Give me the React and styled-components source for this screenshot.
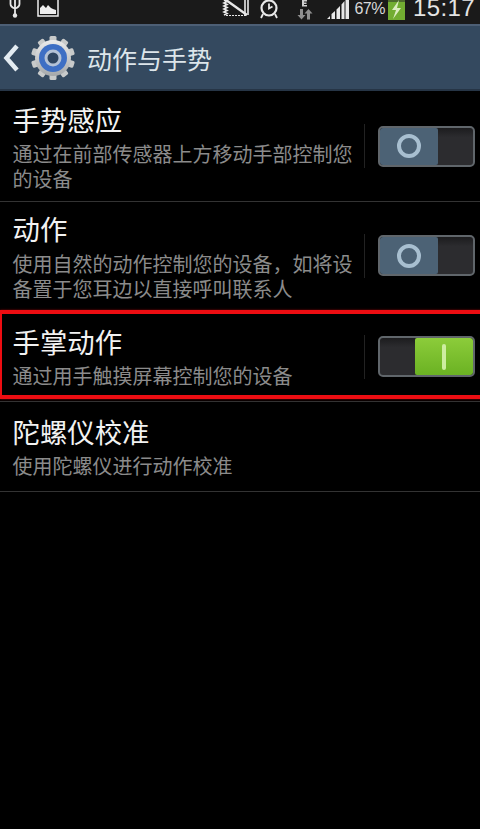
import React from "react";
import styled, { createGlobalStyle } from "styled-components";

const Global = createGlobalStyle`
  html, body { margin: 0; padding: 0; background: #000; }
  body { font-family: "Noto Sans CJK SC", "Liberation Sans", sans-serif; }
`;

const Screen = styled.div`
  width: 480px;
  height: 829px;
  overflow: hidden;
  background: #000;
  display: flex;
  flex-direction: column;
`;

const StatusBar = styled.div`
  height: 24px;
  flex: none;
  background: #1a1a1a;
  display: flex;
  align-items: flex-start;
  padding-left: 9px;
  overflow: hidden;
  color: #e6e6e6;
`;

const StatusLeft = styled.div`
  display: flex;
  align-items: flex-start;
  gap: 16px;
  flex: 1;
`;

const StatusRight = styled.div`
  display: flex;
  align-items: flex-start;
`;

const StatusIcon = styled.svg`
  display: block;
  flex: none;
  margin-left: ${(p) => p.$left || 0}px;
`;

const Percent = styled.span`
  font: 16px/16px "Liberation Sans", sans-serif;
  letter-spacing: -0.5px;
  color: #d8d8d8;
  margin: 1px 3px 0 5px;
`;

const Clock = styled.span`
  font: 24px/20px "Liberation Sans", sans-serif;
  letter-spacing: 0.4px;
  color: #e4e4e4;
  margin: -2px 5px 0 8px;
`;

const ActionBar = styled.header`
  height: 67px;
  flex: none;
  box-sizing: border-box;
  background: #34495f;
  border-top: 2px solid #4d5f75;
  border-bottom: 2px solid #263546;
  display: flex;
  align-items: center;
  padding-left: 3px;
`;

const Title = styled.h1`
  margin: 0 0 0 11px;
  font-size: 25px;
  font-weight: 400;
  line-height: 34px;
  color: #dde5ea;
`;

const List = styled.div`
  display: flex;
  flex-direction: column;
`;

const Row = styled.div`
  position: relative;
  box-sizing: border-box;
  height: ${(p) => p.$h}px;
  display: flex;
  align-items: center;
  padding: 0 5px ${(p) => p.$pb || 0}px 12.5px;
  border-bottom: 1px solid #333;

  ${(p) =>
    p.$marked &&
    `&::after {
      content: "";
      position: absolute;
      left: 0;
      right: -4px;
      top: -2px;
      bottom: 2px;
      border-style: solid;
      border-color: #ed0d12;
      border-width: 4px 4px 4px 2px;
      box-shadow: 0 0 2px #8a0508;
      pointer-events: none;
    }`}
`;

const Texts = styled.div`
  flex: 1;
  min-width: 0;
  align-self: flex-start;
  padding-top: ${(p) => p.$top}px;
`;

const Heading = styled.div`
  font-size: 27.4px;
  line-height: 36px;
  color: #f2f2f2;
`;

const Sub = styled.div`
  font-size: 20px;
  line-height: 24.5px;
  margin-top: ${(p) => p.$gap}px;
  color: #8b8b8b;
  width: 344px;
`;

const Separator = styled.div`
  width: 1px;
  height: 44px;
  background: #222;
  margin-right: 13px;
  flex: none;
`;

const Toggle = styled.div`
  width: 97px;
  height: 41px;
  flex: none;
  box-sizing: border-box;
  border: 2px solid #60666b;
  border-radius: 5px;
  background: linear-gradient(#1c1c1e, #2c2c2f 25%, #2c2c2f);
  display: flex;
  justify-content: ${(p) => (p.$on ? "flex-end" : "flex-start")};
  overflow: hidden;
`;

const Thumb = styled.div`
  width: 58px;
  height: 100%;
  background: ${(p) => (p.$on ? "linear-gradient(#8ccc3a, #6bb223)" : "#4c6275")};
  border-radius: 2px;
  display: flex;
  align-items: center;
  justify-content: center;
`;

const Ring = styled.div`
  width: 24px;
  height: 24px;
  box-sizing: border-box;
  border: 4px solid #a8bfd0;
  border-radius: 50%;
`;

const Bar = styled.div`
  width: 4px;
  height: 26px;
  background: #cdeda0;
  border-radius: 2px;
`;

const Usb = () => (
  <StatusIcon width="12" height="18" viewBox="0 0 12 18" fill="none" stroke="#e8e8e8" strokeWidth="1.8">
    <path d="M6 0v15M1.500 0v4q0 3 4.500 4.500Q10.500 7 10.500 4V0" />
    <circle cx="6" cy="15.500" r="2.200" fill="#e8e8e8" stroke="none" />
  </StatusIcon>
);

const Picture = () => (
  <StatusIcon width="22" height="17" viewBox="0 0 22 17">
    <rect x="1" y="-3" width="20" height="19" fill="#161616" stroke="#eee" strokeWidth="1.500" />
    <path d="M3 14V8l3-3 3 3 2-3 3 3 2 1 3 1v4z" fill="#eee" />
  </StatusIcon>
);

const Nfc = () => (
  <StatusIcon width="28" height="17" viewBox="0 0 28 17" fill="none" stroke="#e8e8e8">
    <path d="M2 0l3 1.500-3 1.500 3 1.500-3 1.500 3 1.500-3 1.500 3 1.500-3 1.500 3 1.500-3 1.500" strokeWidth="1.700" />
    <path d="M23 0v15M26 0v15" strokeWidth="1.600" />
    <path d="M4 0l21 15" strokeWidth="2.400" />
    <path d="M4 15.500h20" strokeWidth="1.200" strokeDasharray="2 1" />
  </StatusIcon>
);

const Alarm = () => (
  <StatusIcon $left={9} width="20" height="19" viewBox="0 0 20 19" fill="none" stroke="#e8e8e8" strokeWidth="2.200">
    <circle cx="10" cy="8" r="7.500" />
    <path d="M10 3.500v5l3.500-2M4 14l-2 4M16 14l2 4" strokeWidth="1.800" />
  </StatusIcon>
);

const Data = () => (
  <StatusIcon $left={18} width="16" height="20" viewBox="0 0 16 20">
    <path d="M5 0h5v1.500H7v1h2.500V4H7v1h3v1.500H5z" fill="#cfcfcf" />
    <path d="M3 9h3v6h2.500l-4 4.500-4-4.500H3zM10 19.500h3v-6h2.500l-4-4.500-4 4.500H10z" fill="#8f8f8f" />
  </StatusIcon>
);

const Signal = () => (
  <StatusIcon $left={14} width="22" height="20" viewBox="0 0 22 20" fill="#e8e8e8">
    <path d="M0 19l3-3v3zM4.500 19v-5l3.500-3v8zM9.500 19V9.500l3.500-3.500v13zM14.500 19V4.500L17.500 1v18zM18.500 19V0H22v19z" />
  </StatusIcon>
);

const Battery = () => (
  <StatusIcon width="17" height="20" viewBox="0 0 17 20">
    <rect width="17" height="20" fill="#72ad31" />
    <rect width="17" height="2" fill="#4d6a2c" />
    <path d="M11 0L4 10h4l-3 9 8-11H9z" fill="#dcedc0" />
  </StatusIcon>
);

const Back = () => (
  <svg width="16" height="30" viewBox="0 0 16 30" fill="none" stroke="#e4ecf2" strokeWidth="4.500">
    <path d="M14 3L3.500 15 14 27" />
  </svg>
);

const Gear = () => {
  const teeth = Array.from({ length: 10 }, (_, i) => i * 36);
  return (
    <svg width="46" height="46" viewBox="0 0 46 46" style={{ marginLeft: 11 }}>
      <defs>
        <linearGradient id="gearMetal" x1="0" y1="0" x2="0" y2="1">
          <stop offset="0" stopColor="#ececec" />
          <stop offset="1" stopColor="#a5a8aa" />
        </linearGradient>
      </defs>
      {teeth.map((a) => (
        <rect key={a} x="19.500" y="1" width="7" height="9" rx="1.500" fill="#c8caca" transform={`rotate(${a} 23 23)`} />
      ))}
      <circle cx="23" cy="23" r="18" fill="url(#gearMetal)" />
      <circle cx="23" cy="23" r="14" fill="#3e6fc4" />
      <circle cx="23" cy="23" r="8.500" fill="#b4c2d6" />
      <circle cx="23" cy="23" r="5.500" fill="#2f4560" />
    </svg>
  );
};

const items = [
  { h: 111, top: 10, gap: 5, title: "手势感应", sub: "通过在前部传感器上方移动手部控制您的设备", on: false },
  { h: 110, top: 8, gap: 6, pb: 2, title: "动作", sub: "使用自然的动作控制您的设备，如将设备置于您耳边以直接呼叫联系人", on: false },
  { h: 90, top: 11, gap: 5, title: "手掌动作", sub: "通过用手触摸屏幕控制您的设备", on: true, marked: true },
  { h: 90, top: 11, gap: 5, title: "陀螺仪校准", sub: "使用陀螺仪进行动作校准" },
];

export default function App() {
  return (
    <Screen>
      <Global />
      <StatusBar>
        <StatusLeft>
          <Usb />
          <Picture />
        </StatusLeft>
        <StatusRight>
          <Nfc />
          <Alarm />
          <Data />
          <Signal />
          <Percent>67%</Percent>
          <Battery />
          <Clock>15:17</Clock>
        </StatusRight>
      </StatusBar>
      <ActionBar>
        <Back />
        <Gear />
        <Title>动作与手势</Title>
      </ActionBar>
      <List>
        {items.map((it) => (
          <Row key={it.title} $h={it.h} $pb={it.pb} $marked={it.marked}>
            <Texts $top={it.top}>
              <Heading>{it.title}</Heading>
              <Sub $gap={it.gap}>{it.sub}</Sub>
            </Texts>
            {it.on !== undefined && (
              <>
                <Separator />
                <Toggle $on={it.on}>
                  <Thumb $on={it.on}>{it.on ? <Bar /> : <Ring />}</Thumb>
                </Toggle>
              </>
            )}
          </Row>
        ))}
      </List>
    </Screen>
  );
}
